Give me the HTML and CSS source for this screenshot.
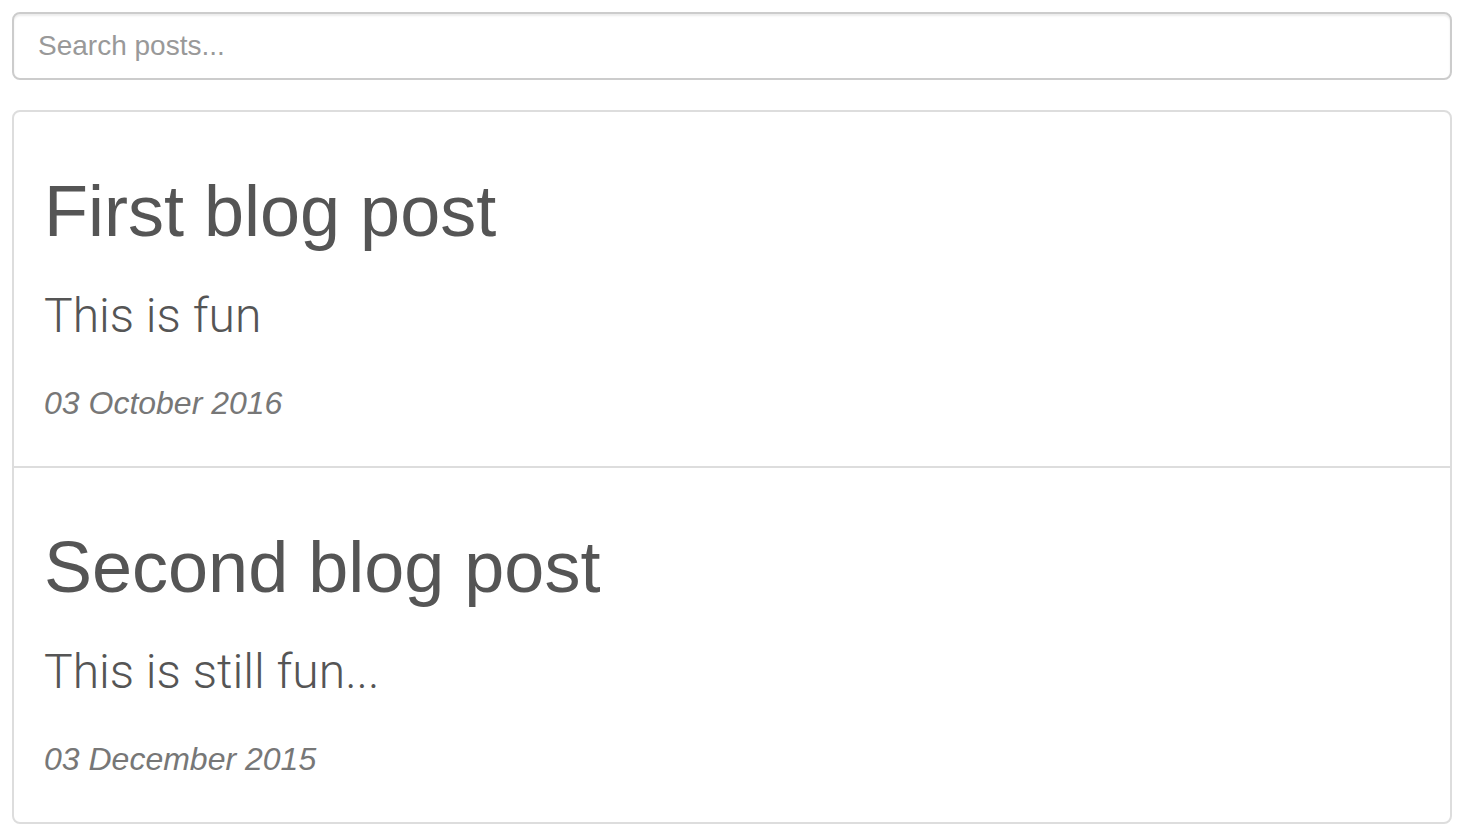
FILE: index.html
```html
<!DOCTYPE html>
<html lang="en">
<head>
<meta charset="utf-8">
<title>Posts</title>
<link rel="stylesheet" href="styles.css">
</head>
<body>
  <div class="form-group">
    <input class="search" type="text" placeholder="Search posts...">
  </div>
  <div class="list-group">
    <div class="list-item">
      <h1 class="post-title">First blog post</h1>
      <p class="post-body">This is fun</p>
      <p class="post-date">03 October 2016</p>
    </div>
    <div class="list-item">
      <h1 class="post-title">Second blog post</h1>
      <p class="post-body">This is still fun...</p>
      <p class="post-date">03 December 2015</p>
    </div>
  </div>
</body>
</html>
```

FILE: styles.css
```css
html, body {
  background: #fff;
}
body {
  margin: 12px;
  font-family: "Liberation Sans", Arial, sans-serif;
  color: #555;
}
.form-group {
  margin-bottom: 30px;
}
.search {
  display: block;
  box-sizing: border-box;
  width: 100%;
  height: 68px;
  padding: 12px 24px;
  font-family: "Liberation Sans", Arial, sans-serif;
  font-size: 28px;
  color: #555;
  background: #fff;
  border: 2px solid #ccc;
  border-radius: 8px;
  box-shadow: inset 0 2px 2px rgba(0,0,0,.075);
  outline: none;
}
.search::placeholder {
  color: #999;
}
.list-group {
  border: 2px solid #ddd;
  border-radius: 8px;
}
.list-item {
  padding: 20px 30px;
}
.list-item + .list-item {
  border-top: 2px solid #ddd;
}
.post-title {
  font-size: 72px;
  line-height: 79px;
  font-weight: 400;
  margin: 40px 0 20px;
  color: #555;
}
.post-body {
  font-family: Roboto, "Liberation Sans", sans-serif;
  font-weight: 300;
  font-size: 48px;
  line-height: 53px;
  margin: 38px 0 0;
  color: #555;
}
.post-date {
  font-style: italic;
  font-size: 32px;
  line-height: 35px;
  margin: 44px 0 25px;
  color: #777;
}
```
